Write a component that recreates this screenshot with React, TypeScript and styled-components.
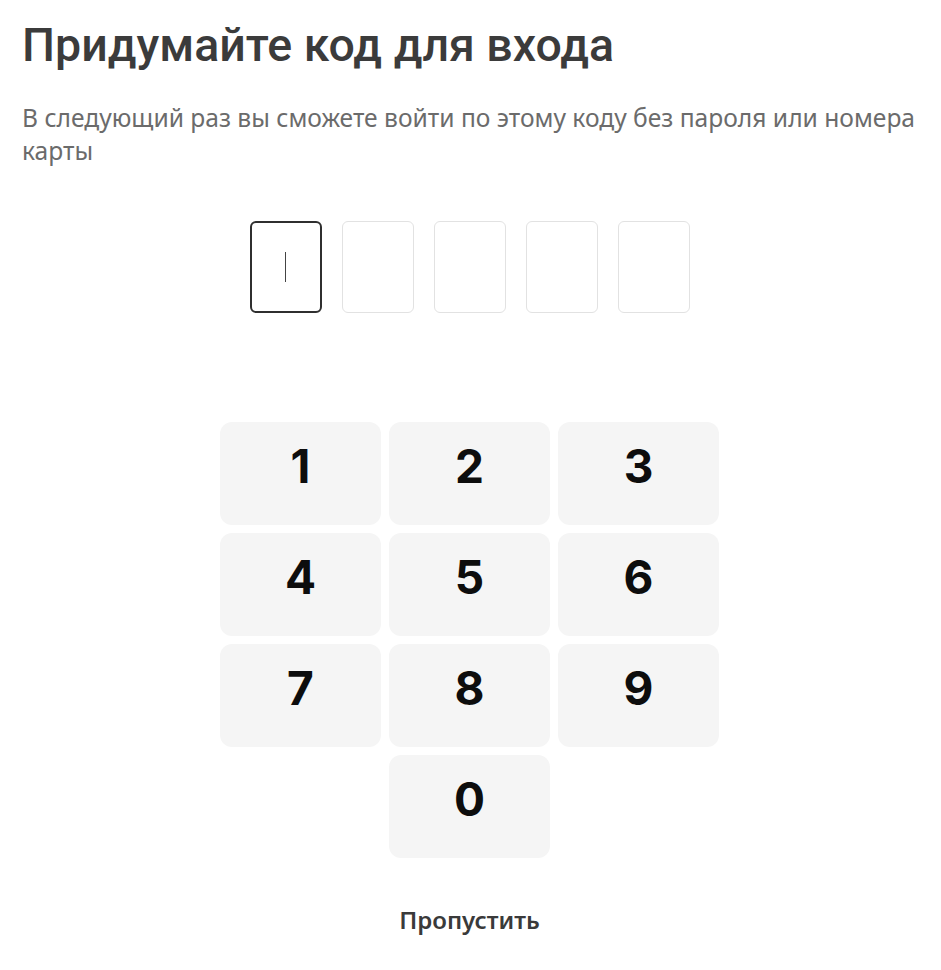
import React from "react";
import styled, { createGlobalStyle } from "styled-components";

const Global = createGlobalStyle`
  html, body { margin: 0; padding: 0; background: #fff; }
  body { font-family: "Noto Sans", "Open Sans", sans-serif; }
`;

const Page = styled.div`
  width: 941px;
  padding: 19px 24px 0 22px;
  box-sizing: border-box;
  display: flex;
  flex-direction: column;
`;

const Title = styled.h1`
  margin: 0;
  font-family: "Roboto", "Noto Sans", sans-serif;
  font-size: 46.5px;
  line-height: 52px;
  font-weight: 500;
  color: #3b3b3b;
`;

const Subtitle = styled.p`
  margin: 30px -8px 0 0;
  font-size: 24.6px;
  line-height: 33px;
  color: #6b6b6b;
  font-weight: 400;
`;

const Boxes = styled.div`
  display: flex;
  justify-content: center;
  gap: 20px;
  margin-top: 54px;
`;

const CodeBox = styled.div<{ $active?: boolean }>`
  width: 72px;
  height: 92px;
  box-sizing: border-box;
  border-radius: 6px;
  border: ${(p) => (p.$active ? "2px solid #2f2f2f" : "1px solid #e2e2e2")};
  display: flex;
  align-items: center;
  justify-content: center;
`;

const Caret = styled.span`
  width: 1.5px;
  height: 30px;
  background: #444;
`;

const Keypad = styled.div`
  display: grid;
  grid-template-columns: repeat(3, 161px);
  grid-auto-rows: 103px;
  gap: 8px;
  justify-content: center;
  margin-top: 109px;
`;

const Key = styled.button<{ $col?: number }>`
  ${(p) => (p.$col ? `grid-column: ${p.$col};` : "")}
  border: none;
  border-radius: 12px;
  background: #f5f5f5;
  font-family: "Inter", "Lato", sans-serif;
  font-size: 46px;
  font-weight: 700;
  color: #0d0d0d;
  display: flex;
  justify-content: center;
  align-items: center;
  padding: 0 0 16px;
  cursor: pointer;
`;

const Skip = styled.button`
  align-self: center;
  margin-top: 45px;
  border: none;
  background: none;
  font-family: "Noto Sans", sans-serif;
  font-size: 24px;
  font-weight: 600;
  color: #3a3a3a;
  cursor: pointer;
  padding: 0;
`;

export default function App() {
  const digits = ["1", "2", "3", "4", "5", "6", "7", "8", "9"];
  return (
    <>
      <Global />
      <Page>
        <Title>Придумайте код для входа</Title>
        <Subtitle>
          В следующий раз вы сможете войти по этому коду без пароля или номера карты
        </Subtitle>
        <Boxes>
          {[0, 1, 2, 3, 4].map((i) => (
            <CodeBox key={i} $active={i === 0}>
              {i === 0 && <Caret />}
            </CodeBox>
          ))}
        </Boxes>
        <Keypad>
          {digits.map((d) => (
            <Key key={d}>{d}</Key>
          ))}
          <Key $col={2}>0</Key>
        </Keypad>
        <Skip>Пропустить</Skip>
      </Page>
    </>
  );
}
